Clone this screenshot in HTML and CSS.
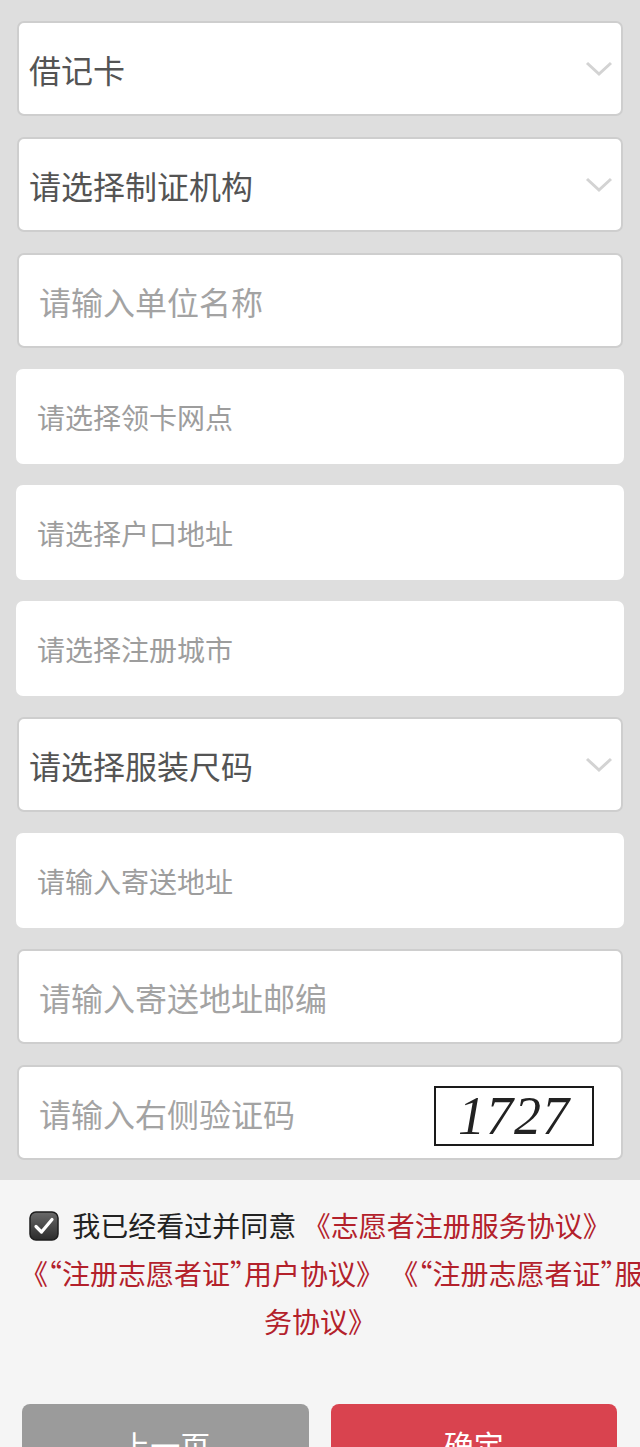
FILE: index.html
```html
<!DOCTYPE html>
<html lang="zh-CN">
  <head>
    <meta charset="UTF-8" />
    <meta name="viewport" content="width=device-width, initial-scale=1" />
    <title>志愿者证申领</title>
    <link rel="stylesheet" href="styles.css">
  </head>
  <body>
    <!-- 表单区 -->
    <div class="form">
      <div class="field line select">
        <span class="val">借记卡</span>
        <svg class="arrow" width="30" height="18" viewBox="0 0 30 18"><polyline points="3,3 15,14 27,3" /></svg>
      </div>
      <div class="field line select">
        <span class="val">请选择制证机构</span>
        <svg class="arrow" width="30" height="18" viewBox="0 0 30 18"><polyline points="3,3 15,14 27,3" /></svg>
      </div>
      <div class="field line">
        <input type="text" placeholder="请输入单位名称">
      </div>
      <div class="field small">
        <input type="text" placeholder="请选择领卡网点" readonly>
      </div>
      <div class="field small">
        <input type="text" placeholder="请选择户口地址" readonly>
      </div>
      <div class="field small">
        <input type="text" placeholder="请选择注册城市" readonly>
      </div>
      <div class="field line select">
        <span class="val">请选择服装尺码</span>
        <svg class="arrow" width="30" height="18" viewBox="0 0 30 18"><polyline points="3,3 15,14 27,3" /></svg>
      </div>
      <div class="field small">
        <input type="text" placeholder="请输入寄送地址">
      </div>
      <div class="field line">
        <input type="text" placeholder="请输入寄送地址邮编">
      </div>
      <div class="field line code">
        <input type="text" placeholder="请输入右侧验证码">
        <div class="captcha">1727</div>
      </div>
    </div>

    <!-- 协议 -->
    <div class="agree">
      <p class="agree-text">
        <span class="check">
          <svg width="30" height="30" viewBox="0 0 30 30">
            <defs>
              <linearGradient id="cb" x1="0" y1="0" x2="0" y2="1">
                <stop offset="0" stop-color="#6a6a6a" />
                <stop offset="1" stop-color="#2b2b2b" />
              </linearGradient>
            </defs>
            <rect x="1" y="1" width="28" height="28" rx="6" fill="url(#cb)" stroke="#1e1e1e" stroke-width="1.5" />
            <polyline points="7,15.5 12.5,21 23,8.5" fill="none" stroke="#fff" stroke-width="3.2" stroke-linecap="round" stroke-linejoin="round" />
          </svg>
        </span>我已经看过并同意 <a href="#">《志愿者注册服务协议》</a><br><a href="#">《<span class="q">“</span>注册志愿者证<span class="q">”</span>用户协议》</a> <a href="#">《<span class="q">“</span>注册志愿者证<span class="q">”</span>服<br>务协议》</a>
      </p>
    </div>

    <!-- 버튼 -->
    <div class="btns">
      <button class="btn prev">上一页</button>
      <button class="btn ok">确定</button>
    </div>
  </body>
</html>
```
FILE: styles.css
```css
/* 초기화 */
html,
body,
p {
  margin: 0;
  padding: 0;
}
html {
  overflow: hidden; /* 모바일 화면이라 스크롤바 없음 */
}
body {
  font-family: "Noto Sans CJK SC", sans-serif;
  background-color: #f5f5f5;
}

/* 表单区 - 회색 배경 */
.form {
  display: flex;
  flex-direction: column;
  gap: 21px;
  padding: 21px 0 20px;
  background-color: #dedede;
}
/* 입력 박스 공통 */
.field {
  display: flex;
  align-items: center;
  box-sizing: border-box;
  height: 95px;
  margin: 0 16px;
  padding: 0 21px;
  background-color: #fff;
  border-radius: 7px;
}
/* 테두리 있는 박스 */
.field.line {
  margin: 0 17px;
  padding: 0 20px;
  border: 2px solid #cecece;
}
.field input {
  flex: 1;
  min-width: 0;
  padding: 0;
  border: 0;
  outline: 0;
  background: transparent;
  font-family: inherit;
  font-size: 32px;
  color: #4d4d4d;
}
.field input::placeholder {
  color: #a3a3a3;
}
.field.small input {
  font-size: 28px;
}
.field.small input::placeholder {
  color: #9d9d9d;
}

/* 선택 박스 */
.field.select {
  padding: 0 7px 0 10px;
}
.select .val {
  flex: 1;
  font-size: 32px;
  color: #545454;
}
.select .arrow polyline {
  fill: none;
  stroke: #d3d3d3;
  stroke-width: 3;
}

/* 验证码 */
.field.code {
  padding-right: 27px;
}
.captcha {
  box-sizing: border-box;
  width: 160px;
  height: 60px;
  margin-top: 7px;
  border: 2px solid #1a1a1a;
  font-family: "Liberation Serif", serif;
  font-style: italic;
  font-size: 54px;
  line-height: 56px;
  letter-spacing: 1px;
  text-align: center;
  color: #222;
}

/* 协议 */
.agree {
  overflow: hidden;
  padding: 21px 20px 0;
}
.agree-text {
  font-size: 28px;
  line-height: 48px;
  text-align: center;
  white-space: nowrap;
  color: #222;
}
.agree-text a {
  color: #b3212b;
  text-decoration: none;
}
/* 따옴표 반각 */
.agree-text .q {
  font-feature-settings: "halt";
}
.check {
  display: inline-block;
  width: 30px;
  height: 30px;
  margin-right: 13px;
  vertical-align: -4px;
}
.check svg {
  display: block;
}

/* 버튼 */
.btns {
  display: flex;
  gap: 22px;
  margin-top: 59px;
  padding: 0 23px 0 22px;
}
.btn {
  flex: 1;
  height: 80px;
  border: 0;
  border-radius: 8px;
  font-family: inherit;
  font-size: 30px;
  color: #fff;
}
.btn.prev {
  background-color: #9b9b9b;
}
.btn.ok {
  background-color: #d9434f;
}
```
